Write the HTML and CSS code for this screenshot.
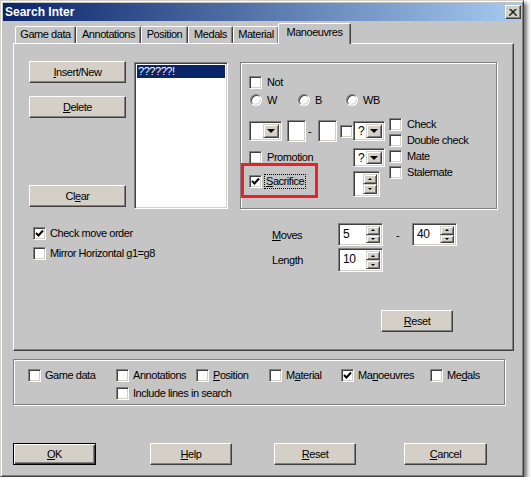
FILE: index.html
```html
<!DOCTYPE html>
<html lang="en">
<head>
    <meta charset="UTF-8">
    <title>Search Inter</title>
    <link rel="stylesheet" href="styles.css">
</head>
<body>
    <div class="window">
        <div class="titlebar">
            <span class="title">Search Inter</span>
            <span class="close-btn">
                <svg width="8" height="7" viewBox="0 0 8 7"><path d="M0.5 0 L7.5 7 M1.5 0 L8.5 7 M7.5 0 L0.5 7 M6.5 0 L-0.5 7" stroke="#000" stroke-width="1"/></svg>
            </span>
        </div>

        <div class="client">
            <div class="tabs">
                <div class="tab tab-game">Game data</div>
                <div class="tab tab-annot">Annotations</div>
                <div class="tab tab-pos">Position</div>
                <div class="tab tab-medals">Medals</div>
                <div class="tab tab-material">Material</div>
                <div class="tab active">Manoeuvres</div>
            </div>

            <div class="panel">
                <div class="top">
                    <div class="btn-col">
                        <button class="btn"><u>I</u>nsert/New</button>
                        <button class="btn btn-delete"><u>D</u>elete</button>
                        <button class="btn btn-clear">Cl<u>e</u>ar</button>
                    </div>

                    <div class="listbox">
                        <div class="list-item selected">??????!</div>
                    </div>

                    <div class="group moves-group">
                        <label class="check-row"><span class="cb"></span>Not</label>
                        <div class="radio-row">
                            <label class="radio-item"><span class="radio"></span>W</label>
                            <label class="radio-item"><span class="radio"></span>B</label>
                            <label class="radio-item"><span class="radio"></span>WB</label>
                        </div>

                        <div class="move-grid">
                            <div class="move-left">
                                <div class="square-row">
                                    <span class="combo combo-piece"><span class="combo-text"></span><span class="drop-btn"><span class="arrow-down"></span></span></span>
                                    <span class="field square"></span>
                                    <span class="dash">-</span>
                                    <span class="field square"></span>
                                    <span class="cb cb-small"></span>
                                </div>
                                <label class="check-row promo-row"><span class="cb"></span>Promotion</label>
                                <label class="check-row sacrifice-row">
                                    <span class="cb"><svg width="9" height="9" viewBox="0 0 9 9"><path d="M1 4 L3.5 6.5 L8 1.5" fill="none" stroke="#000" stroke-width="2"/></svg></span>
                                    <span class="focus"><u>S</u>acrifice</span>
                                </label>
                            </div>

                            <div class="move-mid">
                                <span class="combo combo-q"><span class="combo-text">?</span><span class="drop-btn"><span class="arrow-down"></span></span></span>
                                <span class="combo combo-q2"><span class="combo-text">?</span><span class="drop-btn"><span class="arrow-down"></span></span></span>
                                <span class="spin spin-small"><span class="spin-text"></span><span class="spin-btns"><span class="spin-up"><span class="arrow-up"></span></span><span class="spin-down"><span class="arrow-dn"></span></span></span></span>
                            </div>

                            <div class="move-right">
                                <label class="check-row"><span class="cb"></span>Check</label>
                                <label class="check-row"><span class="cb"></span>Double check</label>
                                <label class="check-row"><span class="cb"></span>Mate</label>
                                <label class="check-row"><span class="cb"></span>Stalemate</label>
                            </div>
                        </div>
                    </div>
                </div>

                <div class="lower">
                    <div class="options">
                        <label class="check-row option-row">
                            <span class="cb"><svg width="9" height="9" viewBox="0 0 9 9"><path d="M1 4 L3.5 6.5 L8 1.5" fill="none" stroke="#000" stroke-width="2"/></svg></span>
                            Check move order
                        </label>
                        <label class="check-row option-row"><span class="cb"></span>Mirror Horizontal g1=g8</label>
                    </div>

                    <div class="range">
                        <div class="range-grid">
                            <span class="range-label"><u>M</u>oves</span>
                            <span class="spin"><span class="spin-text">5</span><span class="spin-btns"><span class="spin-up"><span class="arrow-up"></span></span><span class="spin-down"><span class="arrow-dn"></span></span></span></span>
                            <span class="range-dash">-</span>
                            <span class="spin"><span class="spin-text">40</span><span class="spin-btns"><span class="spin-up"><span class="arrow-up"></span></span><span class="spin-down"><span class="arrow-dn"></span></span></span></span>
                            <span class="range-label">Len<u>g</u>th</span>
                            <span class="spin"><span class="spin-text">10</span><span class="spin-btns"><span class="spin-up"><span class="arrow-up"></span></span><span class="spin-down"><span class="arrow-dn"></span></span></span></span>
                        </div>
                        <div class="reset-row">
                            <button class="btn btn-reset"><u>R</u>eset</button>
                        </div>
                    </div>
                </div>
            </div>

            <div class="group include-group">
                <label class="check-row"><span class="cb"></span>Game data</label>
                <label class="check-row"><span class="cb"></span>Annotations</label>
                <label class="check-row"><span class="cb"></span><span><u>P</u>osition</span></label>
                <label class="check-row"><span class="cb"></span><span>M<u>a</u>terial</span></label>
                <label class="check-row"><span class="cb"><svg width="9" height="9" viewBox="0 0 9 9"><path d="M1 4 L3.5 6.5 L8 1.5" fill="none" stroke="#000" stroke-width="2"/></svg></span><span>Ma<u>n</u>oeuvres</span></label>
                <label class="check-row"><span class="cb"></span><span>Me<u>d</u>als</span></label>
                <label class="check-row include-lines"><span class="cb"></span>Include lines in search</label>
            </div>

            <div class="dialog-buttons">
                <button class="btn btn-dialog btn-default"><u>O</u>K</button>
                <button class="btn btn-dialog btn-help"><u>H</u>elp</button>
                <button class="btn btn-dialog btn-reset-all"><u>R</u>eset</button>
                <button class="btn btn-dialog btn-cancel"><u>C</u>ancel</button>
            </div>
        </div>
    </div>
</body>
</html>
```

FILE: styles.css
```css
*,
*::before,
*::after {
    box-sizing: border-box;
}

body {
    margin: 0;
    background: #fff;
    font-family: "Liberation Sans", Arial, sans-serif;
    font-size: 11px;
    letter-spacing: -0.45px;
    color: #000;
}

label {
    cursor: default;
}

/* window frame */

.window {
    width: 524px;
    height: 477px;
    padding: 2px;
    background: #c5c5c5;
    border: 1px solid;
    border-color: #d4d0c8 #404040 #404040 #d4d0c8;
    box-shadow: inset 1px 1px #fff, inset -1px -1px #808080, 3px 3px 4px rgba(0, 0, 0, 0.55);
}

.titlebar {
    height: 18px;
    padding: 0 0 0 2px;
    display: flex;
    align-items: center;
    justify-content: space-between;
    background: linear-gradient(to right, #0a246a, #a6caf0);
}

.title {
    color: #fff;
    font-weight: bold;
    font-size: 12px;
    letter-spacing: 0;
}

.close-btn {
    width: 16px;
    height: 14px;
    display: flex;
    align-items: center;
    justify-content: center;
    background: #d4d0c8;
    border: 1px solid;
    border-color: #fff #404040 #404040 #fff;
    box-shadow: inset -1px -1px #808080;
}

.client {
    padding: 3px 0 0 10px;
}

/* tabs */

.tabs {
    height: 19px;
    padding-left: 2px;
    display: flex;
    align-items: flex-end;
}

.tab {
    height: 17px;
    line-height: 15px;
    text-align: center;
    white-space: nowrap;
    background: #c5c5c5;
    border: 1px solid;
    border-bottom: none;
    border-color: #fff #404040 transparent #fff;
    border-radius: 2px 2px 0 0;
    box-shadow: inset -1px 0 #808080;
}

.tab-game {
    width: 61px;
}

.tab-annot {
    width: 65px;
}

.tab-pos {
    width: 47px;
}

.tab-medals {
    width: 45px;
}

.tab-material {
    width: 46px;
}

.tab.active {
    width: 73px;
    height: 21px;
    margin: 0 -2px -1px -1px;
    line-height: 16px;
    position: relative;
    z-index: 1;
}

.panel {
    width: 501px;
    height: 308px;
    padding: 17px 0 0 15px;
    border: 1px solid;
    border-color: #fff #404040 #404040 #fff;
    box-shadow: inset -1px -1px #808080;
}

/* buttons */

.btn {
    width: 97px;
    height: 22px;
    padding: 0;
    font: inherit;
    letter-spacing: inherit;
    color: #000;
    background: #d4d0c8;
    border: 1px solid;
    border-color: #fff #404040 #404040 #fff;
    box-shadow: inset -1px -1px #808080;
}

.btn-default {
    border-color: #000;
    box-shadow: inset 1px 1px #fff, inset -1px -1px #404040, inset -2px -2px #808080;
}

/* sunken fields */

.field,
.listbox,
.combo,
.spin {
    background: #fff;
    border: 1px solid;
    border-color: #808080 #fff #fff #808080;
    box-shadow: inset 1px 1px #404040, inset -1px -1px #d4d0c8;
}

.cb {
    flex: none;
    width: 13px;
    height: 13px;
    display: flex;
    align-items: center;
    justify-content: center;
    background: #fff;
    border: 1px solid;
    border-color: #808080 #fff #fff #808080;
    box-shadow: inset 1px 1px #404040, inset -1px -1px #d4d0c8;
}

.radio {
    flex: none;
    width: 12px;
    height: 12px;
    margin-left: 1px;
    border-radius: 50%;
    background: #fff;
    border: 1px solid;
    border-color: #808080 #fff #fff #808080;
    box-shadow: inset 1px 1px #404040, inset -1px -1px #d4d0c8;
}

.check-row {
    height: 16px;
    display: flex;
    align-items: center;
    gap: 5px;
    white-space: nowrap;
}

/* top area */

.top {
    height: 148px;
    display: flex;
}

.btn-col {
    width: 97px;
    height: 146px;
    display: flex;
    flex-direction: column;
}

.btn-delete {
    margin-top: 13px;
}

.btn-clear {
    margin-top: auto;
}

.listbox {
    width: 94px;
    height: 147px;
    margin: 1px 0 0 8px;
    padding: 2px;
}

.list-item {
    height: 13px;
    line-height: 13px;
    padding-left: 1px;
}

.list-item.selected {
    background: #0a246a;
    color: #fff;
}

.group {
    border: 1px solid #808080;
    box-shadow: inset 1px 1px #fff, 1px 1px #fff;
}

.moves-group {
    width: 257px;
    height: 147px;
    margin: 1px 0 0 12px;
    padding: 11px 0 0 8px;
}

.radio-row {
    height: 16px;
    margin-top: 2px;
    display: flex;
}

.radio-item {
    width: 48px;
    display: flex;
    align-items: center;
    gap: 5px;
}

.move-grid {
    margin-top: 8px;
    display: flex;
}

.move-left {
    width: 104px;
}

.square-row {
    height: 22px;
    margin-top: 4px;
    display: flex;
    align-items: center;
}

.combo {
    display: flex;
    padding: 2px;
}

.combo-text {
    flex: 1;
    padding-left: 2px;
    font-size: 12px;
    line-height: 15px;
}

.drop-btn {
    width: 16px;
    display: flex;
    align-items: center;
    justify-content: center;
    background: #d4d0c8;
    border: 1px solid;
    border-color: #d4d0c8 #404040 #404040 #d4d0c8;
    box-shadow: inset 1px 1px #fff, inset -1px -1px #808080;
}

.arrow-down {
    width: 0;
    height: 0;
    border-left: 4px solid transparent;
    border-right: 4px solid transparent;
    border-top: 4px solid #000;
}

.combo-piece {
    width: 34px;
    height: 20px;
}

.square {
    width: 19px;
    height: 22px;
    margin-left: 5px;
}

.dash {
    width: 8px;
    text-align: center;
}

.cb-small {
    margin-left: 3px;
}

.promo-row {
    margin-top: 7px;
}

.sacrifice-row {
    margin-top: 8px;
    gap: 2px;
    position: relative;
}

/* red highlight drawn over the dialog */
.sacrifice-row::after {
    content: "";
    position: absolute;
    left: -8px;
    top: -10px;
    width: 77px;
    height: 35px;
    border: 3px solid #e4232b;
}

.focus {
    padding: 0 1px;
    line-height: 13px;
    border: 1px dotted #000;
}

.move-mid {
    width: 36px;
    display: flex;
    flex-direction: column;
}

.combo-q {
    width: 32px;
    height: 20px;
    margin-top: 5px;
}

.combo-q2 {
    width: 32px;
    height: 19px;
    margin-top: 7px;
}

.spin {
    display: flex;
    padding: 2px;
}

.spin-small {
    width: 27px;
    height: 26px;
    margin-top: 4px;
}

.spin-text {
    flex: 1;
    padding-left: 2px;
    font-size: 12px;
    line-height: 17px;
}

.spin-btns {
    width: 14px;
    display: flex;
    flex-direction: column;
}

.spin-up,
.spin-down {
    flex: 1;
    display: flex;
    align-items: center;
    justify-content: center;
    background: #d4d0c8;
    border: 1px solid;
    border-color: #d4d0c8 #404040 #404040 #d4d0c8;
    box-shadow: inset 1px 1px #fff, inset -1px -1px #808080;
}

.arrow-up {
    width: 0;
    height: 0;
    border-left: 2px solid transparent;
    border-right: 2px solid transparent;
    border-bottom: 2px solid #000;
}

.arrow-dn {
    width: 0;
    height: 0;
    border-left: 2px solid transparent;
    border-right: 2px solid transparent;
    border-top: 2px solid #000;
}

.move-right {
    display: flex;
    flex-direction: column;
}

/* lower area */

.lower {
    margin-top: 14px;
    display: flex;
}

.options {
    width: 243px;
    padding-left: 4px;
}

.option-row {
    height: 20px;
    gap: 4px;
}

.range-grid {
    display: grid;
    grid-template-columns: 66px 45px 29px 45px;
    grid-template-rows: 23px 24px;
    row-gap: 2px;
    align-items: center;
}

.range-grid .spin {
    height: 100%;
}

.range-dash {
    text-align: center;
}

.reset-row {
    margin-top: 38px;
    padding-left: 109px;
}

.btn-reset {
    width: 72px;
}

/* include group */

.include-group {
    width: 492px;
    height: 46px;
    margin-top: 8px;
    padding: 6px 0 0 14px;
    display: grid;
    grid-template-columns: 88px 80px 73px 72px 89px auto;
    grid-auto-rows: 18px;
}

.include-group .check-row {
    height: 18px;
    gap: 4px;
}

.include-lines {
    grid-column: 2 / 6;
}

/* dialog buttons */

.dialog-buttons {
    margin-top: 38px;
    display: flex;
}

.btn-dialog {
    width: 82px;
}

.btn-default,
.btn-cancel {
    width: 83px;
}

.btn-help {
    margin-left: 54px;
}

.btn-reset-all {
    margin-left: 42px;
}

.btn-cancel {
    margin-left: 48px;
}
```
